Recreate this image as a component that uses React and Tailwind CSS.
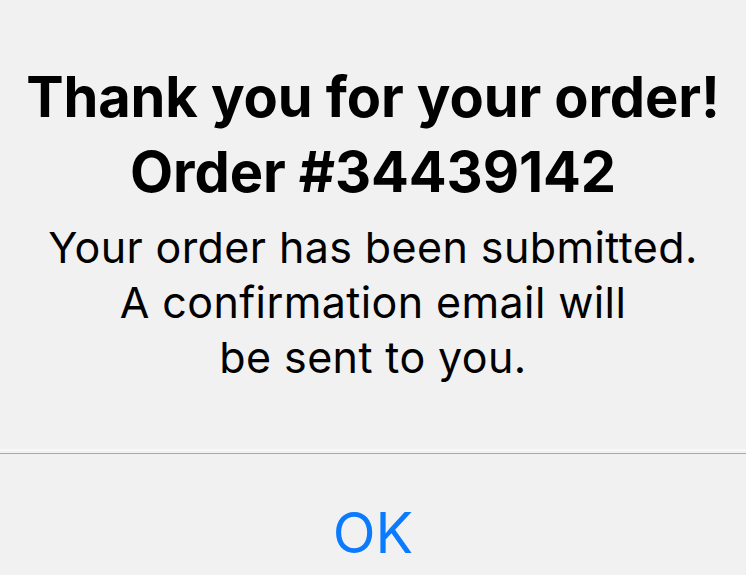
export default function App() {
  return (
    <div className="min-h-screen w-full bg-[#f1f1f1] font-['Inter','Noto_Sans',sans-serif] text-black overflow-hidden">
      <div className="flex flex-col items-center pt-[60px] text-center">
        <h1 className="text-[56px] leading-[75px] font-bold tracking-[-0.1px]">
          Thank you for your order!
          <br />
          Order #34439142
        </h1>
        <p className="mt-[10px] text-[43px] leading-[55px] font-normal tracking-[0.4px]">
          Your order has been submitted.
          <br />
          A confirmation email will
          <br />
          be sent to you.
        </p>
      </div>
      <div className="mt-[64px] h-[2px] bg-[#f8f8f8]" />
      <div className="mt-[2px] h-px bg-[#aaaaaa]" />
      <div className="flex justify-center pt-[51px]">
        <button className="text-[56px] leading-[56px] text-[#0a7aff]">OK</button>
      </div>
    </div>
  );
}
